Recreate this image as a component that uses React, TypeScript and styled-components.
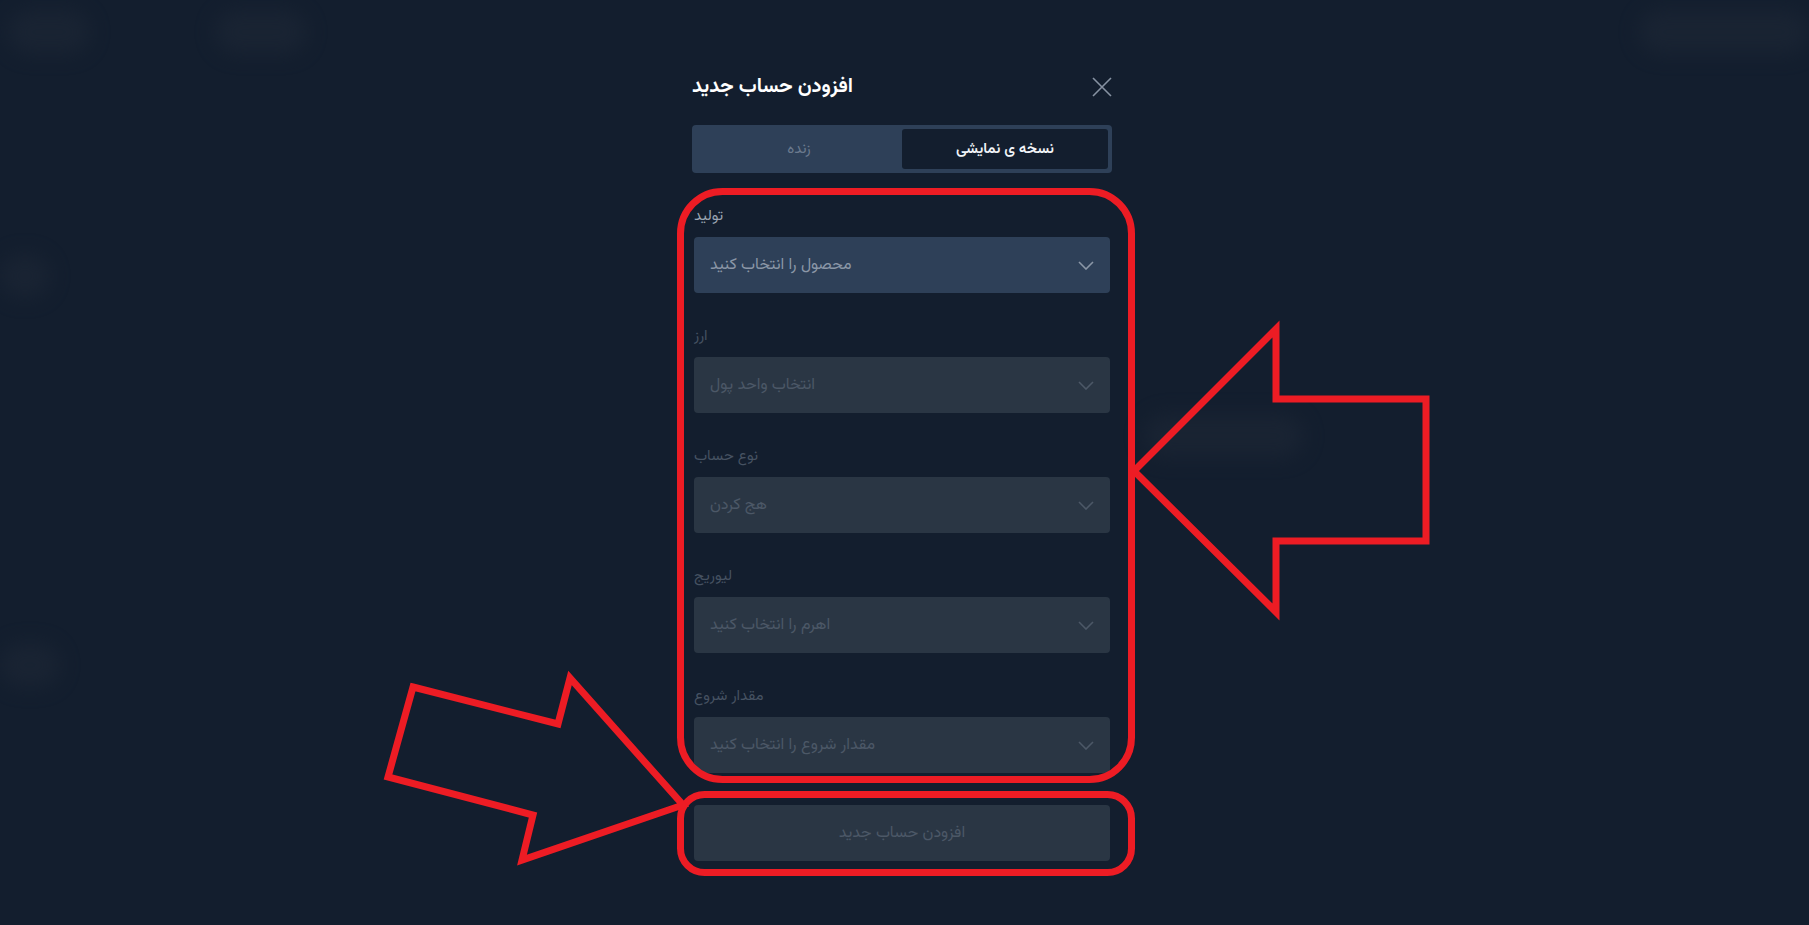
import styled, { createGlobalStyle } from "styled-components";

const GlobalStyle = createGlobalStyle`
  * {
    box-sizing: border-box;
  }
  body {
    margin: 0;
    background-color: #131e2e;
    font-family: "Vazirmatn", "Noto Sans Arabic", "DejaVu Sans", sans-serif;
  }
`;

const Page = styled.div`
  position: relative;
  width: 100%;
  height: 100vh;
  overflow: hidden;
  background-color: #131e2e;
`;

/* the page behind the modal, blurred out */
const Backdrop = styled.div`
  display: flex;
  flex-direction: column;
  height: 100%;
  filter: blur(10px);
  opacity: 0.8;
`;
const BackHeader = styled.div`
  display: flex;
  flex-direction: row;
  align-items: center;
  justify-content: space-between;
  padding: 10px 0px 0px 8px;
`;
const BackGroup = styled.div`
  display: flex;
  flex-direction: row;
  gap: 125px;
`;
const BackPill = styled.div<{ $w: number }>`
  width: ${(p) => p.$w}px;
  height: 44px;
  border-radius: 22px;
  background-color: #1b2534;
`;
const BackBody = styled.div`
  display: flex;
  flex-direction: row;
  flex: 1;
`;
const BackSide = styled.div`
  display: flex;
  flex-direction: column;
  gap: 345px;
  padding-top: 200px;
  width: 80px;
`;
const BackMain = styled.div`
  display: flex;
  flex: 1;
  justify-content: flex-end;
  padding: 360px 505px 0px 0px;
`;

const Overlay = styled.div`
  position: absolute;
  inset: 0;
  display: flex;
  justify-content: center;
  padding: 75px 5px 0px 0px;
`;

const Modal = styled.div`
  display: flex;
  flex-direction: column;
  width: 420px;
`;

const TitleRow = styled.div`
  display: flex;
  flex-direction: row;
  align-items: center;
  justify-content: space-between;
  height: 24px;
`;
const Title = styled.div`
  font-size: 20px;
  font-weight: bold;
  color: #ffffff;
  line-height: 24px;
`;
const Close = styled.div`
  display: flex;
  width: 20px;
  height: 20px;
  cursor: pointer;
`;

const Tabs = styled.div`
  display: grid;
  grid-template-columns: 1fr 1fr;
  margin-top: 26px;
  height: 48px;
  padding: 4px;
  border-radius: 4px;
  background-color: #2e4058;
`;
const Tab = styled.div<{ $active?: boolean }>`
  display: flex;
  align-items: center;
  justify-content: center;
  border-radius: 3px;
  font-size: 15px;
  font-weight: ${(p) => (p.$active ? 600 : 400)};
  color: ${(p) => (p.$active ? "#f1f4f8" : "#6b7a8e")};
  background-color: ${(p) => (p.$active ? "#131e2e" : "transparent")};
`;

const Fields = styled.div`
  display: flex;
  flex-direction: column;
  gap: 34px;
  margin-top: 34px;
  padding: 0px 2px;
`;
const Field = styled.div`
  display: flex;
  flex-direction: column;
`;
const Label = styled.div<{ $disabled?: boolean }>`
  font-size: 15px;
  line-height: 20px;
  margin-bottom: 10px;
  color: ${(p) => (p.$disabled ? "#465262" : "#9ba5b2")};
`;
const Select = styled.div<{ $disabled?: boolean }>`
  display: flex;
  flex-direction: row;
  align-items: center;
  justify-content: space-between;
  height: 56px;
  padding: 0px 16px;
  border-radius: 4px;
  font-size: 16px;
  background-color: ${(p) => (p.$disabled ? "#2a3644" : "#2e4058")};
  color: ${(p) => (p.$disabled ? "#4c5867" : "#8b97a7")};
`;

const Submit = styled.div`
  display: flex;
  align-items: center;
  justify-content: center;
  margin: 32px 2px 0px;
  height: 56px;
  border-radius: 4px;
  font-size: 16px;
  background-color: #2a3644;
  color: #4c5867;
`;

const Marks = styled.svg`
  position: absolute;
  top: 0;
  left: 0;
  pointer-events: none;
`;

const Chevron = ({ color }: { color: string }) => (
  <svg width="16" height="9" viewBox="0 0 16 9" fill="none">
    <path d="M1 1L8 8L15 1" stroke={color} strokeWidth="1.6" />
  </svg>
);

const fields = [
  { label: "تولید", value: "محصول را انتخاب کنید", disabled: false },
  { label: "ارز", value: "انتخاب واحد پول", disabled: true },
  { label: "نوع حساب", value: "هج کردن", disabled: true },
  { label: "لیوریج", value: "اهرم را انتخاب کنید", disabled: true },
  { label: "مقدار شروع", value: "مقدار شروع را انتخاب کنید", disabled: true },
];

const App: React.FC = () => {
  return (
    <Page>
      <GlobalStyle />
      <Backdrop>
        <BackHeader>
          <BackGroup>
            <BackPill $w={82} />
            <BackPill $w={92} />
          </BackGroup>
          <BackPill $w={170} />
        </BackHeader>
        <BackBody>
          <BackSide>
            <BackPill $w={50} />
            <BackPill $w={60} />
          </BackSide>
          <BackMain>
            <BackPill $w={160} />
          </BackMain>
        </BackBody>
      </Backdrop>

      <Overlay>
        <Modal>
          <TitleRow>
            <Title>افزودن حساب جدید</Title>
            <Close>
              <svg width="20" height="20" viewBox="0 0 20 20" fill="none">
                <path d="M1 1L19 19M19 1L1 19" stroke="#8792a2" strokeWidth="1.6" />
              </svg>
            </Close>
          </TitleRow>

          <Tabs>
            <Tab>زنده</Tab>
            <Tab $active>نسخه ی نمایشی</Tab>
          </Tabs>

          <Fields>
            {fields.map((f) => (
              <Field key={f.label}>
                <Label $disabled={f.disabled}>{f.label}</Label>
                <Select $disabled={f.disabled}>
                  <span>{f.value}</span>
                  <Chevron color={f.disabled ? "#4c5867" : "#8b97a7"} />
                </Select>
              </Field>
            ))}
          </Fields>

          <Submit>افزودن حساب جدید</Submit>
        </Modal>
      </Overlay>

      {/* red annotations drawn over the screenshot */}
      <Marks width="1809" height="925" viewBox="0 0 1809 925" fill="none">
        <g stroke="#ed1c24" strokeWidth="7" strokeLinejoin="miter">
          <rect x="680.5" y="191.5" width="451" height="588" rx="42" />
          <rect x="680.5" y="794.5" width="451" height="78" rx="24" />
          <polygon points="1134,471 1276,329 1276,399 1426,399 1426,541 1276,541 1276,612" />
          <polygon points="413,687 558,724 570,678 683,805 522,860 533,815 388,777" />
        </g>
      </Marks>
    </Page>
  );
};

export default App;
